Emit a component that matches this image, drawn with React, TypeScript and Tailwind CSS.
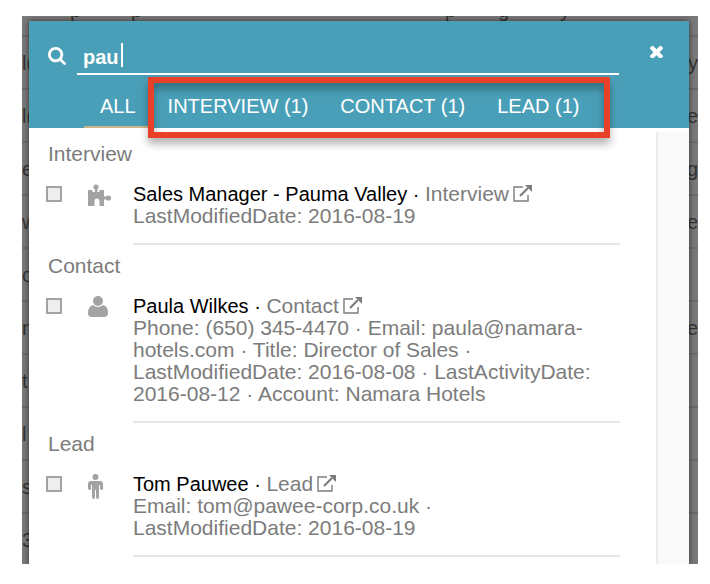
import { useState, type ReactNode } from 'react'

interface SearchResult {
  group: string
  name: string
  details: string
  icon: ReactNode
}

const puzzleIcon = (
  <svg viewBox="0 0 24 26" className="w-6 h-[26px]" fill="currentColor" aria-hidden="true">
    <circle cx="8" cy="3" r="2.6" />
    <path d="M7 4h2.4v4h2V6H16v6.5h4v3h-4V22h-4.5v-5a2.5 2.5 0 0 0-5 0v5H0V6h4.5v2H7z" />
    <circle cx="20.5" cy="14" r="2.6" />
  </svg>
)

const userIcon = (
  <svg viewBox="0 0 24 26" className="w-6 h-[26px]" fill="currentColor" aria-hidden="true">
    <circle cx="10" cy="5" r="5" />
    <path d="M5 9q5 4 10 0q5 1 5 8q0 4-4 4H4q-4 0-4-4q0-7 5-8z" />
  </svg>
)

const personIcon = (
  <svg viewBox="0 0 24 26" className="w-6 h-[26px]" fill="currentColor" aria-hidden="true">
    <circle cx="7.500" cy="3" r="3" />
    <path d="M3 7h9q3 0 3 3v5q0 1-1 1t-2-1v-4h-1v12q0 2-1.500 2t-1.500-2v-7H7v7q0 2-1.500 2T4 23V11H3v4q0 1-1 1t-2-1v-5q0-3 3-3z" />
  </svg>
)

const results: SearchResult[] = [
  {
    group: 'Interview',
    name: 'Sales Manager - Pauma Valley',
    details: 'LastModifiedDate: 2016-08-19',
    icon: puzzleIcon,
  },
  {
    group: 'Contact',
    name: 'Paula Wilkes',
    details:
      'Phone: (650) 345-4470 · Email: paula@namara-hotels.com · Title: Director of Sales · LastModifiedDate: 2016-08-08 · LastActivityDate: 2016-08-12 · Account: Namara Hotels',
    icon: userIcon,
  },
  {
    group: 'Lead',
    name: 'Tom Pauwee',
    details: 'Email: tom@pawee-corp.co.uk · LastModifiedDate: 2016-08-19',
    icon: personIcon,
  },
]

const tabs = ['ALL', 'INTERVIEW (1)', 'CONTACT (1)', 'LEAD (1)']

// [left edge, right edge] of each row of the page under the dialog
const pageRows = [
  ['l(', 'y'],
  ['l(', 'e'],
  ['e', 'g'],
  ['w', 'e'],
  ['o', ''],
  ['n', 'e'],
  ['t', ''],
  ['l', ''],
  ['s', ''],
  ['3', ''],
]

function SearchIcon() {
  return (
    <svg viewBox="0 0 1664 1664" className="w-[18px] h-[18px]" fill="currentColor" aria-hidden="true">
      <path d="M1152 704q0-185-131.5-316.5t-316.5-131.5-316.5 131.5-131.5 316.5 131.5 316.5 316.5 131.5 316.5-131.5 131.5-316.5zm512 832q0 52-38 90t-90 38q-54 0-90-38l-343-342q-179 124-399 124-143 0-273.5-55.5t-225-150-150-225-55.5-273.5 55.5-273.5 150-225 225-150 273.5-55.5 273.5 55.5 225 150 150 225 55.5 273.5q0 220-124 399l343 343q37 37 37 90z" />
    </svg>
  )
}

function CloseIcon() {
  return (
    <svg viewBox="302 302 1188 1188" className="w-[13px] h-[13px]" fill="currentColor" aria-hidden="true">
      <path d="M1490 1322q0 40-28 68l-136 136q-28 28-68 28t-68-28l-294-294-294 294q-28 28-68 28t-68-28l-136-136q-28-28-28-68t28-68l294-294-294-294q-28-28-28-68t28-68l136-136q28-28 68-28t68 28l294 294 294-294q28-28 68-28t68 28l136 136q28 28 28 68t-28 68l-294 294 294 294q28 28 28 68z" />
    </svg>
  )
}

function ExternalLinkIcon() {
  return (
    <svg viewBox="0 0 20 18" className="inline-block w-5 h-[18px] align-[-1px]" fill="none" stroke="currentColor" aria-hidden="true">
      <path d="M10 3H1v14h14v-6" strokeWidth="1.4" />
      <path d="M7 12l8-8" strokeWidth="2.2" />
      <path d="M12 1h7v7z" fill="currentColor" stroke="none" />
    </svg>
  )
}

function PageBehind() {
  return (
    <div className="absolute inset-0 overflow-hidden text-xl text-[#333]" aria-hidden="true">
      <div className="-mt-8">
        <div className="flex h-[53px] items-center border-b-2 border-[#6c6c6c] pl-12">
          <span className="w-[61px]">p</span>
          <span className="w-[314px]">p</span>
          <span className="w-[53px]">p</span>
          <span className="w-[62px]">g</span>
          <span>y</span>
        </div>
        {pageRows.map(([left, right], i) => (
          <div key={i} className="flex h-[53px] items-center justify-between border-b-2 border-[#6c6c6c]">
            <span>{left}</span>
            <span>{right}</span>
          </div>
        ))}
      </div>
    </div>
  )
}

function ResultSection({ result }: { result: SearchResult }) {
  return (
    <section className="pt-[10px] text-[21px] leading-[22px] text-[#7c7c7c]">
      <h2>{result.group}</h2>
      <div className="mt-[18px] flex">
        <input
          type="checkbox"
          aria-label={`Select ${result.name}`}
          className="-ml-0.5 mt-[3px] size-4 shrink-0 appearance-none border-2 border-[#a3a3a3] bg-[#eee] checked:bg-[#4a9fb8]"
        />
        <div className="ml-[26px] mt-px w-[45px] shrink-0 text-[#a3a3a3]">{result.icon}</div>
        <div className="min-w-0 flex-1 border-b-2 border-[#e6e6e6] pb-4">
          <div>
            <span className="text-xl leading-[22px] text-black">{result.name} · </span>
            {result.group}
            <a href="#" aria-label={`Open ${result.name}`} className="ml-1">
              <ExternalLinkIcon />
            </a>
          </div>
          <p className="pr-4">{result.details}</p>
        </div>
      </div>
    </section>
  )
}

export default function App() {
  const [query, setQuery] = useState('pau')
  const [activeTab, setActiveTab] = useState('ALL')

  return (
    <div className="min-h-screen bg-white pt-4 pr-3 pb-5 pl-[22px] font-['Liberation_Sans',Arial,sans-serif]">
      <div className="relative overflow-hidden bg-[#7a7a7a] pt-[5px] pr-[9px] pl-[7px]">
        <PageBehind />
        <main className="relative bg-white shadow-[0_0_6px_rgba(0,0,0,0.6)]">
          <header className="bg-[#4a9fb8] pl-[19px] text-white">
            <div className="flex pt-5">
              <label htmlFor="query" aria-label="Search" className="mt-[6px] w-[29px]">
                <SearchIcon />
              </label>
              <div className="relative flex-1 border-b-2 border-white">
                <input
                  id="query"
                  value={query}
                  onChange={e => setQuery(e.target.value)}
                  className="block h-8 w-full bg-transparent px-1.5 text-xl font-bold outline-none"
                />
                <span className="absolute top-0.5 left-11 h-6 w-0.5 bg-white" />
              </div>
              <button aria-label="Close" className="mt-1 mr-[26px] ml-[31px] h-[13px]">
                <CloseIcon />
              </button>
            </div>
            <nav className="flex h-[53px] pl-9 text-xl [text-shadow:0_0_1px_white,0_0_1px_white]">
              {tabs.map(tab => (
                <button
                  key={tab}
                  onClick={() => setActiveTab(tab)}
                  className={`border-b-2 px-4 pt-2.5 whitespace-nowrap ${tab === activeTab ? 'border-[#cdb58a]' : 'border-transparent'}`}
                >
                  {tab}
                </button>
              ))}
            </nav>
          </header>

          <div className="flex">
            <div className="min-w-0 flex-1 pt-[5px] pr-9 pb-[7px] pl-[19px]">
              {results.map(r => (
                <ResultSection key={r.group} result={r} />
              ))}
            </div>
            <div className="mt-1 w-[33px] border-l-2 border-[#ececec] bg-[#fafafa]" />
          </div>

          {/* Callout around the object tabs */}
          <div className="pointer-events-none absolute top-14 right-[79px] left-[119px] h-[61px] border-6 border-[#e84128] shadow-[0_6px_8px_rgba(0,0,0,0.3),inset_0_6px_8px_rgba(0,0,0,0.3)]" />
        </main>
      </div>
    </div>
  )
}
